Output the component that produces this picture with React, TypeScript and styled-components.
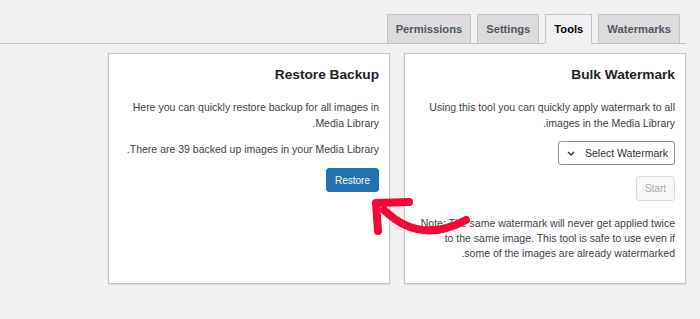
import React from "react";
import styled, { createGlobalStyle } from "styled-components";

const GlobalStyle = createGlobalStyle`
	html, body {
		margin: 0;
		padding: 0;
		background: #f0f0f1;
	}
	body {
		font-family: "Liberation Sans", Arial, sans-serif;
		color: #3c434a;
	}
`;

const Page = styled.div`
	position: relative;
	direction: rtl;
	width: 700px;
	height: 319px;
	box-sizing: border-box;
	padding-right: 14px;
	overflow: hidden;
`;

const TabBar = styled.nav`
	display: flex;
	padding-top: 14px;
	border-bottom: 1px solid #c3c4c7;
`;

const Tab = styled.a<{ $active?: boolean }>`
	display: block;
	box-sizing: border-box;
	height: 30px;
	margin-bottom: -1px;
	margin-right: 6px;
	padding: 0 8px;
	line-height: 28px;
	font-size: 11.2px;
	font-weight: 700;
	text-decoration: none;
	border: 1px solid #c3c4c7;
	border-bottom-color: ${({ $active }) => ($active ? "#f0f0f1" : "#c3c4c7")};
	background: ${({ $active }) => ($active ? "#f0f0f1" : "#dcdcde")};
	color: ${({ $active }) => ($active ? "#000" : "#50575e")};
`;

const Cards = styled.div`
	display: flex;
	gap: 14px;
	margin-top: 9px;
`;

const Card = styled.div`
	display: flex;
	flex-direction: column;
	align-items: flex-start;
	box-sizing: border-box;
	width: 282px;
	height: 231px;
	padding: 12px 10px 12px 12px;
	background: #fff;
	border: 1px solid #c3c4c7;
	box-shadow: 0 1px 1px rgba(0, 0, 0, 0.06);
`;

const Title = styled.h2`
	margin: 0 0 15px;
	font-size: 13.7px;
	line-height: 18px;
	font-weight: 700;
	color: #1d2327;
`;

const Text = styled.p<{ $tight?: boolean }>`
	margin: 0 0 10px;
	font-size: 10.5px;
	line-height: ${({ $tight }) => ($tight ? "15px" : "16px")};
	color: #3c434a;
`;

const Note = styled(Text)`
	margin-top: 15px;
`;

const Button = styled.button<{ $primary?: boolean }>`
	box-sizing: border-box;
	height: ${({ $primary }) => ($primary ? "24px" : "25px")};
	margin-top: ${({ $primary }) => ($primary ? "1px" : "11px")};
	padding: 0 8px;
	font-family: inherit;
	font-size: 10px;
	border-radius: 3px;
	border: 1px solid ${({ $primary }) => ($primary ? "#2271b1" : "#dcdcde")};
	background: ${({ $primary }) => ($primary ? "#2271b1" : "#f6f7f7")};
	color: ${({ $primary }) => ($primary ? "#fff" : "#a7aaad")};
	cursor: ${({ $primary }) => ($primary ? "pointer" : "default")};
`;

const Select = styled.div`
	display: flex;
	align-items: center;
	box-sizing: border-box;
	width: 117px;
	height: 24px;
	padding: 0 6px 0 8px;
	gap: 5px;
	font-size: 10.5px;
	color: #2c3338;
	background: #fff;
	border: 1px solid #8c8f94;
	border-radius: 3px;

	span {
		flex: 1;
		white-space: nowrap;
	}
`;

const Overlay = styled.svg`
	position: absolute;
	top: 0;
	left: 0;
	pointer-events: none;
`;

const App = () => (
	<>
		<GlobalStyle />
		<Page>
			<TabBar>
				<Tab href="#">Watermarks</Tab>
				<Tab href="#" $active>
					Tools
				</Tab>
				<Tab href="#">Settings</Tab>
				<Tab href="#">Permissions</Tab>
			</TabBar>
			<Cards>
				<Card>
					<Title>Bulk Watermark</Title>
					<Text>Using this tool you can quickly apply watermark to all images in the Media Library.</Text>
					<Select>
						<span>Select Watermark</span>
						<svg width="8" height="5" viewBox="0 0 8 5">
							<path d="M1 1l3 3 3-3" fill="none" stroke="#2c3338" strokeWidth="1.3" />
						</svg>
					</Select>
					<Button disabled>Start</Button>
					<Note $tight>
						Note: The same watermark will never get applied twice to the same image. This tool is safe to use
						even if some of the images are already watermarked.
					</Note>
				</Card>
				<Card>
					<Title>Restore Backup</Title>
					<Text>Here you can quickly restore backup for all images in Media Library.</Text>
					<Text>There are 39 backed up images in your Media Library.</Text>
					<Button $primary>Restore</Button>
				</Card>
			</Cards>
			<Overlay width="700" height="319" viewBox="0 0 700 319">
				<g fill="none" stroke="#f5063a" strokeWidth="8" strokeLinecap="round" strokeLinejoin="round">
					<path d="M409 202L376 203L378 231" />
					<path d="M384 210Q420 245 466 220" />
				</g>
			</Overlay>
		</Page>
	</>
);

export default App;
